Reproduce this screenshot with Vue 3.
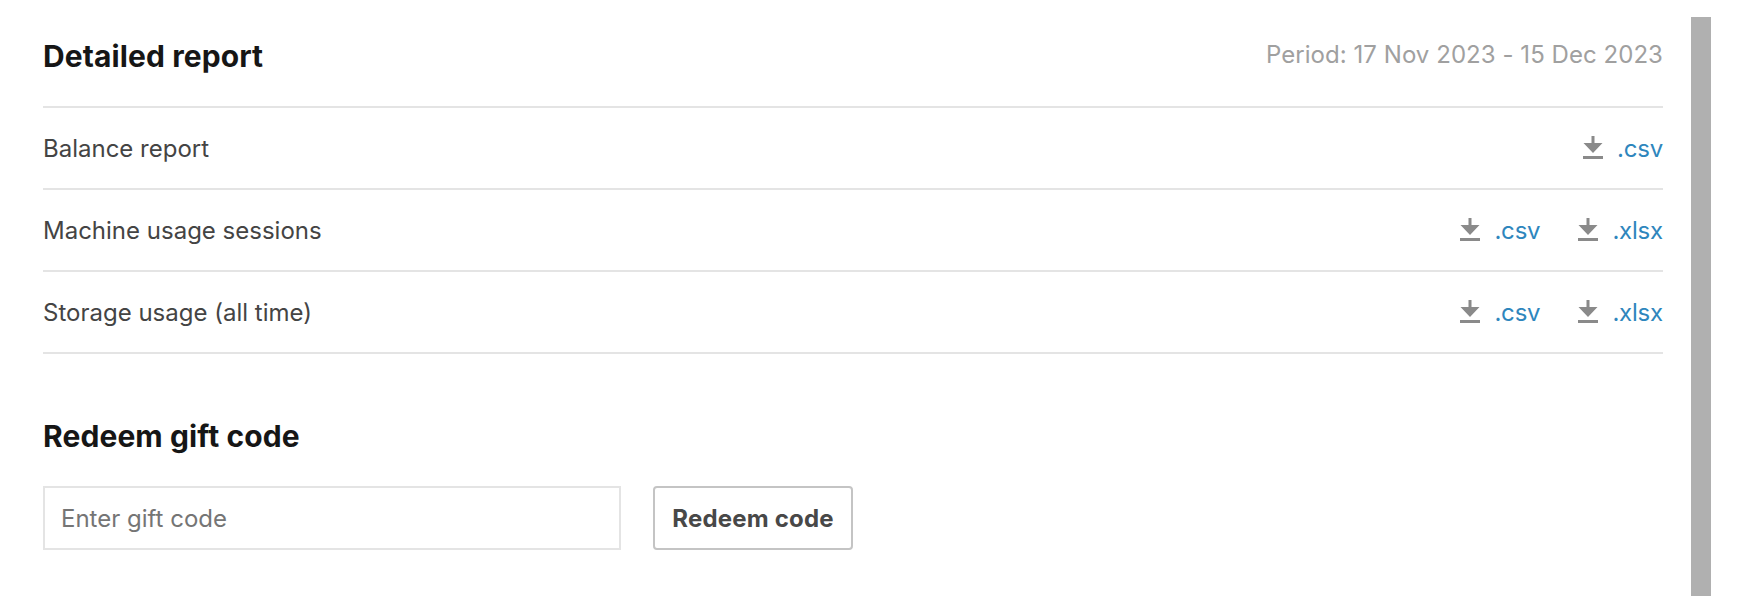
<script setup>
const reports = [
  { name: 'Balance report', files: ['.csv'] },
  { name: 'Machine usage sessions', files: ['.csv', '.xlsx'] },
  { name: 'Storage usage (all time)', files: ['.csv', '.xlsx'] },
];
</script>

<template>
  <div class="page">
    <main class="content">
      <header class="report-head">
        <h2>Detailed report</h2>
        <span class="period">Period: 17 Nov 2023 - 15 Dec 2023</span>
      </header>

      <div v-for="report in reports" :key="report.name" class="report-row">
        <span class="report-name">{{ report.name }}</span>
        <div class="files">
          <a v-for="file in report.files" :key="file" class="file" href="#">
            <svg class="icon" width="20" height="23" viewBox="0 0 20 23">
              <path d="M8.5 0h3v7h8l-9.500 10-9.500-10h8z" fill="#8a8a8a" />
              <rect y="20" width="20" height="3" fill="#8a8a8a" />
            </svg>
            <span>{{ file }}</span>
          </a>
        </div>
      </div>

      <h2 class="gift-title">Redeem gift code</h2>
      <form class="gift-form" @submit.prevent>
        <input type="text" placeholder="Enter gift code" />
        <button type="submit">Redeem code</button>
      </form>
    </main>
    <div class="scrollbar"></div>
  </div>
</template>

<style>
html, body {
  background: #fff;
  overflow: hidden;
}
</style>

<style scoped>
.page {
  display: flex;
  height: 596px;
  padding-right: 29px;
  box-sizing: border-box;
  font-family: Inter, "Liberation Sans", sans-serif;
  background: #fff;
}

.content {
  flex: 1;
  padding: 0 28px 0 43px;
}

.scrollbar {
  width: 20px;
  margin-top: 17px;
  background: #b0b0b0;
}

h2 {
  margin: 0;
  font-size: 30px;
  font-weight: 700;
  letter-spacing: 0.1px;
  color: #161616;
}

.report-head {
  display: flex;
  justify-content: space-between;
  align-items: center;
  height: 108px;
  padding-top: 6px;
  box-sizing: border-box;
  border-bottom: 2px solid #e4e4e4;
}

.period {
  font-size: 24px;
  letter-spacing: 0.05px;
  color: #a0a0a0;
  margin-top: -4px;
}

.report-row {
  display: flex;
  justify-content: space-between;
  align-items: center;
  height: 82px;
  box-sizing: border-box;
  border-bottom: 2px solid #e4e4e4;
}

.report-name {
  font-size: 24px;
  color: #444;
}

.files {
  display: flex;
  gap: 38px;
}

.file {
  display: flex;
  align-items: center;
  gap: 14px;
  font-size: 24px;
  letter-spacing: -0.2px;
  color: #2e86bd;
  text-decoration: none;
}

.icon {
  display: block;
  margin-bottom: 1px;
}

.gift-title {
  margin-top: 64px;
}

.gift-form {
  display: flex;
  gap: 32px;
  margin-top: 32px;
}

input {
  width: 578px;
  height: 64px;
  box-sizing: border-box;
  padding: 0 16px;
  border: 2px solid #e4e4e4;
  border-radius: 0;
  outline: none;
  font: inherit;
  font-size: 24px;
  color: #444;
}

input::placeholder {
  color: #757575;
}

button {
  width: 200px;
  height: 64px;
  box-sizing: border-box;
  background: #fff;
  border: 2px solid #c4c4c4;
  border-radius: 4px;
  font: inherit;
  font-size: 24px;
  font-weight: 700;
  letter-spacing: 0.2px;
  color: #484848;
}
</style>
